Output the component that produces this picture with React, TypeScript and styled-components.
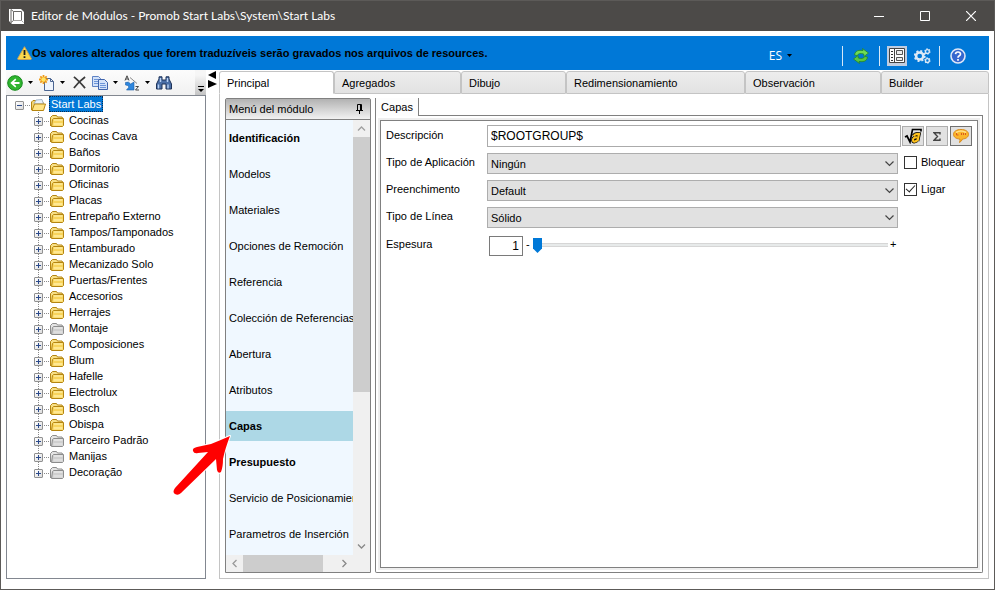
import React from 'react';
import styled, { createGlobalStyle, css } from 'styled-components';

const Global = createGlobalStyle`
  *, *::before, *::after { box-sizing: border-box; }
  body { margin: 0; background: #fff; }
  body, button, input, select { font-family: "Liberation Sans", Arial, sans-serif; font-size: 11px; color: #000; }
  button { border: 0; padding: 0; margin: 0; background: none; }
  ul { list-style: none; margin: 0; padding: 0; }
  svg { display: block; flex: none; }
`;

const Page = styled.div`
  height: 100vh;
  padding: 0 10px 7px 0;
`;

const Window = styled.div`
  position: relative;
  height: 100%;
  display: flex;
  flex-direction: column;
  border: 1px solid #5c5a58;
  background: #fff;
`;

const TitleBar = styled.header`
  flex: none;
  display: flex;
  align-items: center;
  height: 30px;
  padding-left: 8px;
  background: #4c4a48;
`;

const Title = styled.h1`
  flex: 1;
  margin: 0 0 0 7px;
  font: 400 12px/16px Lato, sans-serif;
  color: #fff;
  white-space: nowrap;
`;

const WindowButton = styled.button`
  width: 46px;
  height: 30px;
  display: grid;
  place-items: center;
`;

const Content = styled.div`
  flex: 1;
  min-height: 0;
  display: flex;
  flex-direction: column;
  padding: 5px 5px 10px;
`;

const Banner = styled.div`
  flex: none;
  display: flex;
  align-items: center;
  height: 34px;
  padding: 0 13px 0 11px;
  background: #0078d7;
`;

const BannerText = styled.strong`
  flex: 1;
  white-space: nowrap;
  line-height: 16px;
`;

const BannerTools = styled.div`
  display: flex;
  align-items: center;
  padding-top: 5px;
`;

const Language = styled.button`
  display: flex;
  align-items: center;
  gap: 5px;
  margin-right: 50px;
  color: #fff;
  font: 400 12px/16px "Open Sans", sans-serif;
`;

const Divider = styled.span`
  width: 1px;
  height: 20px;
  background: #d6e8f8;
`;

const BannerButton = styled.button<{ $active?: boolean; $wide?: boolean }>`
  display: grid;
  place-items: center;
  width: 20px;
  height: 20px;
  margin: 0 ${p => (p.$wide ? 8 : 7)}px;
  background: ${p => (p.$active ? '#c0cde0' : 'none')};
  & + & { margin-left: -2px; }
`;

const Columns = styled.div`
  flex: 1;
  min-height: 0;
  display: flex;
`;

const TreePane = styled.aside`
  flex: none;
  width: 200px;
  display: flex;
  flex-direction: column;
`;

const Toolbar = styled.div`
  flex: none;
  display: flex;
  align-items: center;
  height: 25px;
  padding-left: 1px;
  background: linear-gradient(#fcfcfc, #f1f1f1);
`;

const ToolButton = styled.button<{ $menu?: boolean }>`
  display: grid;
  place-items: center;
  width: 16px;
  height: 16px;
  margin-right: ${p => (p.$menu ? 4 : 5)}px;
`;

const DropButton = styled.button`
  display: grid;
  place-items: center;
  width: 7px;
  height: 16px;
  margin-right: 5px;
`;

const Overflow = styled.button`
  align-self: stretch;
  display: grid;
  place-items: end center;
  width: 11px;
  margin-left: auto;
  padding-bottom: 2px;
  background: linear-gradient(#f6f6f6 20%, #c4c4c4);
`;

const Tree = styled.ul`
  flex: 1;
  border: 1px solid #828790;
  padding-left: 8px;
  overflow: hidden;
`;

const Branch = styled.ul`
  margin-left: 19px;
`;

const TreeRow = styled.div<{ $child?: boolean }>`
  display: flex;
  align-items: center;
  height: 16px;
  background: ${p => (p.$child ? 'repeating-linear-gradient(#8a8a8a 0 1px, transparent 1px 2px) 4px 0 / 1px 100% no-repeat' : 'none')};
`;

const TreeNode = styled.li`
  &:last-child > div { background-size: 1px 8px; }
`;

const Toggle = styled.button`
  display: grid;
  place-items: center;
  width: 9px;
  height: 9px;
  margin-top: 2px;
  border: 1px solid #919191;
  border-radius: 1px;
  background: linear-gradient(135deg, #fff, #dcdcdc);
`;

const Stub = styled.span`
  width: 6px;
  height: 1px;
  margin: 2px 0 0 1px;
  background: repeating-linear-gradient(90deg, #8a8a8a 0 1px, transparent 1px 2px);
`;

const FolderIcon = styled.svg`
  margin-top: 2px;
`;

const TreeLabel = styled.span<{ $selected?: boolean }>`
  margin-left: 3px;
  padding: 0 2px;
  line-height: 16px;
  white-space: nowrap;
  ${p => p.$selected && css`
    color: #fff;
    background: #0078d7;
    outline: 1px dotted #0b2c50;
    outline-offset: -1px;
  `}
`;

const Splitter = styled.div`
  flex: none;
  width: 13px;
  padding: 1px 0 0 2px;
`;

const Main = styled.main`
  flex: 1;
  min-width: 0;
  display: flex;
  flex-direction: column;
`;

const TabStrip = styled.div`
  flex: none;
  display: flex;
  height: 24px;
`;

const Tab = styled.button<{ $w: number; $active?: boolean }>`
  flex: none;
  width: ${p => p.$w}px;
  padding-left: 7px;
  margin-top: 1px;
  text-align: left;
  border: 1px solid #c4c4c4;
  border-radius: 3px 3px 0 0;
  background: linear-gradient(#ededed, #e2e2e2);
  ${p => p.$active && css`
    border-bottom-color: #fff;
    background: #fff;
  `}
  &:last-child { flex: 1; }
`;

const TabBody = styled.div`
  flex: 1;
  min-height: 0;
  display: flex;
  gap: 4px;
  padding: 4px 5px 5px;
  border: 1px solid #c4c4c4;
  border-top: 0;
`;

const MenuPanel = styled.nav`
  flex: none;
  width: 146px;
  display: flex;
  flex-direction: column;
  border: 1px solid #808080;
  border-radius: 2px 2px 0 0;
`;

const MenuHeader = styled.div`
  flex: none;
  display: flex;
  align-items: center;
  justify-content: space-between;
  height: 21px;
  padding: 0 7px 0 3px;
  border-bottom: 1px solid #808080;
  background: linear-gradient(#b2b2b2, #f2f2f2);
`;

const MenuBody = styled.div`
  flex: 1;
  min-height: 0;
  display: grid;
  grid-template: minmax(0, 1fr) 17px / minmax(0, 1fr) 17px;
  background: #f0f0f0;
`;

const MenuList = styled.ul`
  display: flex;
  flex-direction: column;
  gap: 6px;
  padding-top: 3px;
  overflow: hidden;
  background: #f0f8ff;
`;

const MenuItem = styled.button<{ $strong?: boolean; $active?: boolean }>`
  display: block;
  width: 100%;
  height: 30px;
  padding-left: 3px;
  text-align: left;
  white-space: nowrap;
  overflow: hidden;
  font-weight: ${p => (p.$strong ? 700 : 400)};
  background: ${p => (p.$active ? '#add8e6' : 'none')};
`;

const ScrollBar = styled.div<{ $horizontal?: boolean }>`
  display: flex;
  flex-direction: ${p => (p.$horizontal ? 'row' : 'column')};
`;

const ScrollArrow = styled.button`
  flex: none;
  display: grid;
  place-items: center;
  width: 17px;
  height: 17px;
`;

const Thumb = styled.span<{ $grow: number }>`
  flex: ${p => p.$grow};
  background: #cdcdcd;
`;

const Rest = styled.span<{ $grow: number }>`
  flex: ${p => p.$grow};
`;

const Detail = styled.section`
  flex: 1;
  min-width: 0;
  display: flex;
  flex-direction: column;
`;

const DetailTabs = styled.div`
  flex: none;
  display: flex;
  height: 18px;
`;

const DetailTab = styled.button`
  width: 44px;
  border: 1px solid #808080;
  border-width: 0 1px;
  background: #fdfdfd;
`;

const DetailLine = styled.span`
  flex: 1;
  border-bottom: 1px solid #808080;
`;

const DetailFrame = styled.div`
  flex: 1;
  display: flex;
  padding: 4px;
  border: 1px solid #808080;
  border-top: 0;
  border-radius: 0 0 2px 2px;
`;

const Form = styled.form`
  flex: 1;
  min-width: 0;
  display: flex;
  flex-direction: column;
  gap: 6px;
  padding: 4px 5px;
  border: 1px solid #808080;
  outline: 2px solid #eee;
`;

const Row = styled.div`
  display: flex;
  align-items: center;
  min-height: 21px;
`;

const FieldLabel = styled.label`
  flex: none;
  width: 101px;
  padding-bottom: 3px;
  white-space: nowrap;
`;

const TextInput = styled.input`
  flex: 1;
  min-width: 0;
  height: 22px;
  padding: 0 3px;
  font-size: 12px;
  border: 1px solid #ababab;
`;

const SideButton = styled.button<{ $focused?: boolean }>`
  display: grid;
  place-items: center;
  width: 22px;
  height: 20px;
  margin-left: 1px;
  border: 1px solid ${p => (p.$focused ? '#707070' : '#adadad')};
  background: #e1e1e1;
  & + & { margin-left: 2px; }
`;

const SelectBox = styled.span`
  position: relative;
  flex: 1;
  display: flex;
  svg { position: absolute; right: 4px; top: 8px; pointer-events: none; }
`;

const Select = styled.select`
  appearance: none;
  width: 100%;
  height: 21px;
  padding: 0 3px;
  border: 1px solid #adadad;
  border-radius: 0;
  background: #e1e1e1;
`;

const Aside = styled.span`
  flex: none;
  width: 74px;
  display: flex;
  padding: 0 0 3px 6px;
`;

const CheckLabel = styled.label`
  display: flex;
  align-items: center;
  gap: 4px;
`;

const Check = styled.input`
  appearance: none;
  width: 13px;
  height: 13px;
  margin: 0;
  border: 1px solid #333;
  background: #fff;
  &:checked {
    background: #fff;
    display: grid;
    place-items: center;
  }
  &:checked::after {
    content: '';
    width: 9px;
    height: 5px;
    margin-bottom: 3px;
    border: solid #222;
    border-width: 0 0 1px 1px;
    transform: rotate(-48deg);
  }
`;

const SliderRow = styled(Row)`
  margin-top: 1px;
`;

const NumberInput = styled.input`
  width: 34px;
  height: 20px;
  margin-left: 2px;
  padding: 0 3px;
  font-size: 12px;
  text-align: right;
  border: 1px solid #7a7a7a;
`;

const Sign = styled.span`
  width: 10px;
  padding: 0 0 3px 3px;
`;

const Slider = styled.input`
  appearance: none;
  flex: 1;
  min-width: 0;
  height: 15px;
  margin: 0;
  background: none;
  &::-webkit-slider-runnable-track {
    height: 15px;
    background: linear-gradient(#d6d6d6 0 1px, #e7eaea 1px 3px, #d6d6d6 3px 4px) 0 5px / 100% 4px no-repeat;
  }
  &::-webkit-slider-thumb {
    appearance: none;
    width: 9px;
    height: 15px;
    background: #0078d7;
    clip-path: polygon(0 0, 100% 0, 100% 70%, 50% 100%, 0 70%);
  }
`;

const SliderEnd = styled.span`
  width: 84px;
  padding: 0 0 4px 2px;
`;

const Pointer = styled.svg`
  position: absolute;
  left: 170px;
  top: 430px;
  pointer-events: none;
`;

const Caret = ({ label }: { label: string }) => (
  <DropButton aria-label={label}>
    <svg width="5" height="3"><path d="M0 0h5L2.500 3z" fill="#000" /></svg>
  </DropButton>
);

const Chevron = ({ turn = 0, color = '#555' }: { turn?: number; color?: string }) => (
  <svg width="9" height="9" viewBox="0 0 9 9">
    <path d="M1 2.500 4.500 6 8 2.500" fill="none" stroke={color} strokeWidth="1.300" transform={`rotate(${turn} 4.500 4.500)`} />
  </svg>
);

const SelectChevron = () => (
  <svg width="9" height="6"><path d="M.5 .5 4.500 4.500 8.500 .5" fill="none" stroke="#444" strokeWidth="1.200" /></svg>
);

const Folder = ({ grey }: { grey?: boolean }) => {
  const line = grey ? '#8c8c8c' : '#b58510';
  return (
    <FolderIcon width="14" height="12" viewBox="0 0 14 12">
      <path d="M.5 11V2.500L2.500 .5h4l1 1.500h4.500l.5 1" fill={grey ? '#e4e4e4' : '#f7df85'} stroke={line} />
      <path d="M2.500 4.500l1-1h10v7l-1 1h-11z" fill={grey ? '#cfcfcf' : '#f8d45c'} stroke={line} />
      <path d="M4 5h8.500" stroke={grey ? '#f6f6f6' : '#fff6bd'} />
      <path d="M3.500 8h9v2.500h-9z" fill={grey ? '#dedede' : '#ffe892'} />
    </FolderIcon>
  );
};

const OpenFolder = () => (
  <FolderIcon width="15" height="12" viewBox="0 0 15 12">
    <path d="M.5 11V3l1.500-1.500h3l1 1.500h6v2" fill="#f2d675" stroke="#b58510" />
    <path d="M3 5l2-4 6-.5 1.500 4.500z" fill="#e8f1fb" stroke="#93a7bd" strokeWidth=".8" />
    <path d="M1 11.500 3.500 5h11l-2 6.500z" fill="#ffe486" stroke="#b58510" />
  </FolderIcon>
);

const tree: [string, boolean?][] = [
  ['Cocinas'], ['Cocinas Cava'], ['Baños'], ['Dormitorio'], ['Oficinas'], ['Placas'],
  ['Entrepaño Externo'], ['Tampos/Tamponados'], ['Entamburado'], ['Mecanizado Solo'],
  ['Puertas/Frentes'], ['Accesorios'], ['Herrajes'], ['Montaje', true], ['Composiciones'],
  ['Blum'], ['Hafelle'], ['Electrolux'], ['Bosch'], ['Obispa'], ['Parceiro Padrão', true],
  ['Manijas', true], ['Decoração', true],
];

const tabs: [string, number][] = [
  ['Principal', 115], ['Agregados', 127], ['Dibujo', 105], ['Redimensionamiento', 179],
  ['Observación', 136], ['Builder', 107],
];

const menu = [
  'Identificación', 'Modelos', 'Materiales', 'Opciones de Remoción', 'Referencia',
  'Colección de Referencias', 'Abertura', 'Atributos', 'Capas', 'Presupuesto',
  'Servicio de Posicionamiento', 'Parametros de Inserción',
];
const strongItems = ['Identificación', 'Capas', 'Presupuesto'];

const Gear = ({ x, y, r, teeth }: { x: number; y: number; r: number; teeth: number }) => {
  const pitch = (Math.PI * 2 * r * 1.35) / (teeth * 2);
  return (
    <g transform={`translate(${x} ${y})`} fill="none" stroke="#dde9f6">
      <circle r={r} strokeWidth={r * 0.7} />
      <circle r={r * 1.35} strokeWidth={r * 0.6} strokeDasharray={`${pitch} ${pitch}`} />
    </g>
  );
};

export default function App() {
  return (
    <>
      <Global />
      <Page>
        <Window>
          <TitleBar>
            <svg width="15" height="15" viewBox="0 0 15 15">
              <path d="M0 0h12l3 3v12H3l-3-3z" fill="#fff" />
              <path d="M4.500 2.500h8v9h-8zM4.500 11.500l-2.500 2M4.500 2.500 2 .5v13" fill="none" stroke="#6a6866" />
              <path d="M4.500 11.500h8l2 2" fill="none" stroke="#a5a3a1" />
            </svg>
            <Title>Editor de Módulos - Promob Start Labs\System\Start Labs</Title>
            <WindowButton aria-label="Minimizar">
              <svg width="10" height="10"><path d="M0 5.500h10" stroke="#fff" /></svg>
            </WindowButton>
            <WindowButton aria-label="Maximizar">
              <svg width="10" height="10"><path d="M.5 .5h9v9h-9z" fill="none" stroke="#fff" /></svg>
            </WindowButton>
            <WindowButton aria-label="Cerrar">
              <svg width="10" height="10"><path d="M0 0l10 10M10 0 0 10" stroke="#fff" strokeWidth="1.200" /></svg>
            </WindowButton>
          </TitleBar>

          <Content>
            <Banner>
              <svg width="15" height="14" viewBox="0 0 15 14">
                <path d="M7.500 .7 14.300 12.500q.2 1-.8 1h-12q-1 0-.8-1z" fill="#fbd84b" stroke="#c8a35a" />
                <path d="M7.500 4v5M7.500 10.300v1.700" stroke="#1c1c1c" strokeWidth="1.800" />
              </svg>
              <BannerText>Os valores alterados que forem traduzíveis serão gravados nos arquivos de resources.</BannerText>
              <BannerTools>
                <Language>
                  ES
                  <svg width="5" height="3"><path d="M0 0h5L2.500 3z" fill="#000" /></svg>
                </Language>
                <Divider />
                <BannerButton $wide aria-label="Actualizar">
                  <svg width="16" height="16" viewBox="0 0 16 16">
                    <path d="M1.500 7Q2 2.500 7 2.300L10 2.500 9.500.5 15.500 5 11 8.500 10.700 6Q6 4.500 4 7.500z" fill="#6fdc55" stroke="#23862a" strokeWidth=".8" />
                    <path d="M14.500 9Q14 13.500 9 13.700L6 13.500l.5 2L.5 11 5 7.500 5.300 10Q10 11.500 12 8.500z" fill="#58c742" stroke="#23862a" strokeWidth=".8" />
                  </svg>
                </BannerButton>
                <Divider />
                <BannerButton $active aria-label="Formulario">
                  <svg width="16" height="16" viewBox="0 0 16 16">
                    <path d="M.5 .5h15v14H.5zM5.500 .5v14" fill="#fff" stroke="#444" />
                    <path d="M2 3.500h2M2 6.500h2M2 9.500h2M2 12.500h2" stroke="#333" />
                    <path d="M7.500 2.500h6v4h-6zM7.500 9.500h6v3h-6z" fill="#eee" stroke="#555" />
                  </svg>
                </BannerButton>
                <BannerButton aria-label="Configuración">
                  <svg width="17" height="16" viewBox="0 0 17 16">
                    <Gear x={5.7} y={8} r={3.6} teeth={8} />
                    <Gear x={13.4} y={3.5} r={1.9} teeth={6} />
                    <Gear x={13.4} y={12.5} r={1.9} teeth={6} />
                  </svg>
                </BannerButton>
                <Divider />
                <BannerButton $wide aria-label="Ayuda">
                  <svg width="16" height="16" viewBox="0 0 16 16">
                    <circle cx="8" cy="8" r="7" fill="#3567cf" stroke="#dfe7f7" strokeWidth="1.600" />
                    <path d="M5.500 6.200Q5.700 4 8 4t2.500 2Q10.500 7.200 9 8 8 8.600 8 9.800M8 11v1.700" fill="none" stroke="#fff" strokeWidth="1.700" />
                  </svg>
                </BannerButton>
              </BannerTools>
            </Banner>

            <Columns>
              <TreePane>
                <Toolbar>
                  <ToolButton $menu aria-label="Volver">
                    <svg width="16" height="16" viewBox="0 0 16 16">
                      <circle cx="8" cy="8" r="7.300" fill="#2fb52f" stroke="#168a1c" />
                      <path d="M3.300 8 8.300 3.500l1 1.200L7 7h5.500v2H7l2.300 2.300-1 1.200z" fill="#fff" />
                    </svg>
                  </ToolButton>
                  <Caret label="Historial" />
                  <ToolButton $menu aria-label="Nuevo">
                    <svg width="16" height="16" viewBox="0 0 16 16">
                      <path d="M5.500 3.500h6l3 3v9h-9z" fill="#eef4fd" stroke="#4b6591" />
                      <path d="M11.500 3.500v3h3" fill="none" stroke="#4b6591" />
                      <path d="M4.500 0v9M0 4.500h9M1.300 1.300l6.400 6.400M7.700 1.300 1.300 7.700" stroke="#f09a16" strokeWidth="1.800" />
                      <circle cx="4.500" cy="4.500" r="2.200" fill="#ffe564" />
                    </svg>
                  </ToolButton>
                  <Caret label="Opciones de nuevo" />
                  <ToolButton aria-label="Eliminar">
                    <svg width="13" height="13" viewBox="0 0 14 14"><path d="M1 1q5 4 12 12M13 1Q6 6 1 13" fill="none" stroke="#3b3b3b" strokeWidth="1.900" /></svg>
                  </ToolButton>
                  <ToolButton $menu aria-label="Copiar">
                    <svg width="16" height="14" viewBox="0 0 16 14">
                      <path d="M.5 .5h6l2 2v8h-8z" fill="#d3e2f9" stroke="#5f83c4" />
                      <path d="M6.500 3.500h6l3 3v7h-9z" fill="#d3e2f9" stroke="#3f63ab" />
                      <path d="M2 3.500h4M2 5.500h4M2 7.500h4M8 7.500h5M8 9.500h6M8 11.500h6" stroke="#6d95d8" />
                    </svg>
                  </ToolButton>
                  <Caret label="Opciones de copia" />
                  <ToolButton $menu aria-label="Ordenar">
                    <svg width="16" height="16" viewBox="0 0 16 16">
                      <path d="M1 5.500 3 .8l2 4.700M1.800 4h2.400M11.500 11.500h3l-3 3.500h3.500" fill="none" stroke="#444" />
                      <path d="M6 2.500l7 6" stroke="#888" />
                      <path d="M1.500 7.500Q5 6 6.500 9L10 7v8H2.500L5 12Q4 10 1.500 10z" fill="#2e86dd" stroke="#1c5fa9" strokeWidth=".6" />
                    </svg>
                  </ToolButton>
                  <Caret label="Opciones de orden" />
                  <ToolButton aria-label="Buscar">
                    <svg width="16" height="14" viewBox="0 0 16 14">
                      <path d="M.5 13V8L3 3V.8h3V4h4V.8h3V3l2.500 5v5H10V8H6v5z" fill="#4a6ea6" stroke="#1e3358" />
                      <path d="M2.500 8.500v4M12 8.500v4M4.500 2v4M11.500 2v4" stroke="#b9d2f4" strokeWidth="1.400" />
                    </svg>
                  </ToolButton>
                  <Overflow aria-label="Más opciones">
                    <svg width="6" height="7"><path d="M0 .5h6" stroke="#000" /><path d="M0 3h6L3 6z" fill="#000" /></svg>
                  </Overflow>
                </Toolbar>
                <Tree>
                  <li>
                    <TreeRow>
                      <Toggle aria-label="Contraer Start Labs"><svg width="5" height="5"><path d="M0 2.500h5" stroke="#2b4a8b" /></svg></Toggle>
                      <Stub />
                      <OpenFolder />
                      <TreeLabel $selected>Start Labs</TreeLabel>
                    </TreeRow>
                    <Branch>
                      {tree.map(([name, grey]) => (
                        <TreeNode key={name}>
                          <TreeRow $child>
                            <Toggle aria-label={`Expandir ${name}`}><svg width="5" height="5"><path d="M0 2.500h5M2.500 0v5" stroke="#2b4a8b" /></svg></Toggle>
                            <Stub />
                            <Folder grey={grey} />
                            <TreeLabel>{name}</TreeLabel>
                          </TreeRow>
                        </TreeNode>
                      ))}
                    </Branch>
                  </li>
                </Tree>
              </TreePane>

              <Splitter>
                <svg width="9" height="17"><path d="M8 0v8L0 4zM0 9v8l9-4z" fill="#000" /></svg>
              </Splitter>

              <Main>
                <TabStrip role="tablist">
                  {tabs.map(([name, w], i) => (
                    <Tab key={name} role="tab" aria-selected={i === 0} $w={w} $active={i === 0}>{name}</Tab>
                  ))}
                </TabStrip>
                <TabBody>
                  <MenuPanel>
                    <MenuHeader>
                      Menú del módulo
                      <svg width="7" height="10"><path d="M1.500 6V.5h4V6M4.500 1v5M0 6.500h7M3.500 7v3" fill="none" stroke="#000" /></svg>
                    </MenuHeader>
                    <MenuBody>
                      <MenuList>
                        {menu.map(name => (
                          <li key={name}>
                            <MenuItem $strong={strongItems.includes(name)} $active={name === 'Capas'}>{name}</MenuItem>
                          </li>
                        ))}
                      </MenuList>
                      <ScrollBar>
                        <ScrollArrow aria-label="Subir"><Chevron turn={180} color="#a0a0a0" /></ScrollArrow>
                        <Thumb $grow={255} />
                        <Rest $grow={146} />
                        <ScrollArrow aria-label="Bajar"><Chevron color="#888" /></ScrollArrow>
                      </ScrollBar>
                      <ScrollBar $horizontal>
                        <ScrollArrow aria-label="Izquierda"><Chevron turn={90} color="#999" /></ScrollArrow>
                        <Thumb $grow={80} />
                        <Rest $grow={13} />
                        <ScrollArrow aria-label="Derecha"><Chevron turn={-90} color="#888" /></ScrollArrow>
                      </ScrollBar>
                    </MenuBody>
                  </MenuPanel>

                  <Detail>
                    <DetailTabs role="tablist">
                      <DetailTab role="tab" aria-selected>Capas</DetailTab>
                      <DetailLine />
                    </DetailTabs>
                    <DetailFrame>
                      <Form onSubmit={e => e.preventDefault()}>
                        <Row>
                          <FieldLabel htmlFor="descripcion">Descripción</FieldLabel>
                          <TextInput id="descripcion" defaultValue="$ROOTGROUP$" />
                          <SideButton type="button" aria-label="Fórmula">
                            <svg width="18" height="16" viewBox="0 0 18 16">
                              <path d="M1 9l2-1 3 6L8.500 1.500H17v2" fill="none" stroke="#000" strokeWidth="1.700" />
                              <path d="M9.500 8Q11 5.500 15 6l-1.500 7M13 9.500Q9 9 9 12t4 .5" fill="none" stroke="#000" strokeWidth="3.600" />
                              <path d="M9.500 8Q11 5.500 15 6l-1.500 7M13 9.500Q9 9 9 12t4 .5" fill="none" stroke="#ffc21c" strokeWidth="2.200" />
                            </svg>
                          </SideButton>
                          <SideButton type="button" aria-label="Suma">
                            <svg width="8" height="9" viewBox="0 0 8 9"><path d="M7 2.500V.8H1l3.500 3.600L1 8.200h6V6.500" fill="none" stroke="#444" strokeWidth="1.400" /></svg>
                          </SideButton>
                          <SideButton type="button" $focused aria-label="Comentario">
                            <svg width="16" height="14" viewBox="0 0 16 14">
                              <path d="M8 .5c4.500 0 7.500 2 7.500 4.800S13 9.800 9.500 10q-1 2.500-3 3.500.8-2 .3-3.500C3 9.800.5 8 .5 5.300S3.500.5 8 .5z" fill="#fbb62c" stroke="#d88a1c" />
                              <path d="M3 3.500Q8 .5 13 3.500" fill="none" stroke="#ffe08a" strokeWidth="1.500" />
                              <path d="M3.500 4v2h2M8.500 4v2M10.500 4v2M12.500 4v2" fill="none" stroke="#d85b20" />
                            </svg>
                          </SideButton>
                        </Row>
                        <Row>
                          <FieldLabel htmlFor="aplicacion">Tipo de Aplicación</FieldLabel>
                          <SelectBox>
                            <Select id="aplicacion"><option>Ningún</option></Select>
                            <SelectChevron />
                          </SelectBox>
                          <Aside><CheckLabel><Check type="checkbox" />Bloquear</CheckLabel></Aside>
                        </Row>
                        <Row>
                          <FieldLabel htmlFor="preenchimento">Preenchimento</FieldLabel>
                          <SelectBox>
                            <Select id="preenchimento"><option>Default</option></Select>
                            <SelectChevron />
                          </SelectBox>
                          <Aside><CheckLabel><Check type="checkbox" defaultChecked />Ligar</CheckLabel></Aside>
                        </Row>
                        <Row>
                          <FieldLabel htmlFor="linea">Tipo de Línea</FieldLabel>
                          <SelectBox>
                            <Select id="linea"><option>Sólido</option></Select>
                            <SelectChevron />
                          </SelectBox>
                          <Aside />
                        </Row>
                        <SliderRow>
                          <FieldLabel htmlFor="espesura">Espesura</FieldLabel>
                          <NumberInput id="espesura" defaultValue="1" />
                          <Sign>-</Sign>
                          <Slider type="range" min={1} max={100} defaultValue={1} aria-label="Espesura" />
                          <SliderEnd>+</SliderEnd>
                        </SliderRow>
                      </Form>
                    </DetailFrame>
                  </Detail>
                </TabBody>
              </Main>
            </Columns>
          </Content>

          <Pointer width="64" height="68" viewBox="0 0 64 68">
            <path
              d="M59 5Q50 9 40 13L26 16Q21 17 22 20 23 23 27 22L37 21 4 57Q1 61 4 63 7 65 10 62L45 28 46 39Q47 43 50 41 52 36 52 28 54 18 59 5z"
              fill="#f00"
              stroke="#fff"
              strokeWidth="2"
              paintOrder="stroke"
              strokeLinejoin="round"
            />
          </Pointer>
        </Window>
      </Page>
    </>
  );
}
